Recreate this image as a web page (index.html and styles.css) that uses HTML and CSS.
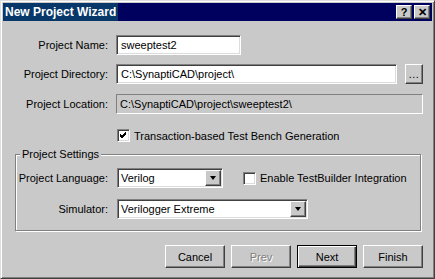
FILE: index.html
```html
<!DOCTYPE html>
<html>
<head>
<meta charset="utf-8">
<link rel="stylesheet" href="styles.css">
</head>
<body>
<div class="win">
  <div class="titlebar">
    <span class="title">New Project Wizard</span>
    <div class="tbtns">
      <div class="tbtn">?</div>
      <div class="tbtn">✕</div>
    </div>
  </div>
  <div class="row r1">
    <span class="lbl">Project Name:</span>
    <div class="field w-name">sweeptest2</div>
  </div>
  <div class="row r2">
    <span class="lbl">Project Directory:</span>
    <div class="field w-dir">C:\SynaptiCAD\project\</div>
    <div class="browse">...</div>
  </div>
  <div class="row r3">
    <span class="lbl">Project Location:</span>
    <div class="static w-loc">C:\SynaptiCAD\project\sweeptest2\</div>
  </div>
  <div class="checkrow">
    <div class="check"><svg width="11" height="11" viewBox="0 0 11 11"><path d="M2 4 L4 6 L8 2 M2 5 L4 7 L8 3 M2 6 L4 8 L8 4" stroke="#000" stroke-width="1" fill="none" shape-rendering="crispEdges"/></svg></div>
    <span class="clabel">Transaction-based Test Bench Generation</span>
  </div>
  <fieldset class="group">
    <legend>Project Settings</legend>
    <div class="grow g1">
      <span class="glbl">Project Language:</span>
      <div class="combo w-lang"><span class="ctext">Verilog</span><div class="arrow"><i></i></div></div>
      <div class="check unchecked"></div>
      <span class="clabel">Enable TestBuilder Integration</span>
    </div>
    <div class="grow g2">
      <span class="glbl">Simulator:</span>
      <div class="combo w-sim"><span class="ctext">Verilogger Extreme</span><div class="arrow"><i></i></div></div>
    </div>
  </fieldset>
  <div class="btns">
    <div class="btn">Cancel</div>
    <div class="btn disabled">Prev</div>
    <div class="btn default">Next</div>
    <div class="btn">Finish</div>
  </div>
</div>
</body>
</html>
```

FILE: styles.css
```css
* { box-sizing: border-box; }
body {
  margin: 0;
  background: #c9c9c9;
  font: 11px "Liberation Sans", Arial, sans-serif;
  color: #000;
}
.win {
  width: 435px;
  height: 279px;
  border: 1px solid;
  border-color: #dedede #404040 #404040 #dedede;
  box-shadow: inset 1px 1px #fff, inset -1px -1px #808080;
  padding: 2px;
  display: flex;
  flex-direction: column;
}
.titlebar {
  height: 18px;
  background: #00005e;
  display: flex;
  align-items: center;
}
.title {
  height: 18px;
  line-height: 18px;
  background: #08386a;
  color: #fff;
  font-weight: bold;
  font-size: 12px;
  padding: 0 2px;
  min-width: 110px;
  white-space: nowrap;
}
.tbtns {
  margin-left: auto;
  margin-right: 2px;
  display: flex;
  gap: 2px;
}
.tbtn {
  width: 16px;
  height: 14px;
  background: #c9c9c9;
  border: 1px solid;
  border-color: #fff #404040 #404040 #fff;
  box-shadow: inset -1px -1px #808080;
  font-weight: bold;
  font-size: 11px;
  line-height: 12px;
  text-align: center;
}
.row {
  display: flex;
  align-items: center;
  height: 20px;
}
.r1 { margin-top: 14px; }
.r2 { margin-top: 9px; }
.r3 { margin-top: 10px; }
.lbl {
  width: 105px;
  text-align: right;
  margin-right: 8px;
}
.field {
  height: 20px;
  background: #fff;
  border: 1px solid;
  border-color: #808080 #fff #fff #808080;
  box-shadow: inset 1px 1px #404040, inset -1px -1px #dcdcdc;
  padding: 0 4px;
  display: flex;
  align-items: center;
  white-space: nowrap;
  overflow: hidden;
}
.w-name { width: 125px; }
.w-dir { width: 281px; }
.browse {
  width: 18px;
  height: 20px;
  margin-left: 8px;
  border: 1px solid;
  border-color: #fff #404040 #404040 #fff;
  box-shadow: inset -1px -1px #808080;
  text-align: center;
  line-height: 18px;
  letter-spacing: 0.5px;
}
.static {
  height: 20px;
  border: 1px solid;
  border-color: #808080 #fff #fff #808080;
  padding: 0 3px;
  display: flex;
  align-items: center;
  white-space: nowrap;
}
.w-loc { width: 307px; }
.checkrow {
  display: flex;
  align-items: center;
  height: 13px;
  margin-top: 15px;
  padding-left: 114px;
}
.check {
  width: 13px;
  height: 13px;
  background: #fff;
  border: 1px solid;
  border-color: #808080 #fff #fff #808080;
  box-shadow: inset 1px 1px #404040, inset -1px -1px #dcdcdc;
  flex: none;
}
.check svg { display: block; }
.clabel { margin-left: 4px; white-space: nowrap; }
.group {
  margin: 6px 11px 0 12px;
  padding: 0 0 11px 0;
  border: 1px solid #808080;
  box-shadow: inset 1px 1px #fff, 1px 1px #fff;
  min-inline-size: 0;
}
.group legend {
  margin-left: 4px;
  padding: 0 2px;
  line-height: 13px;
  background: #c9c9c9;
}
.grow {
  display: flex;
  align-items: center;
  height: 20px;
}
.g1 { margin-top: 7px; }
.g2 { margin-top: 11px; }
.glbl {
  width: 92px;
  text-align: right;
  margin-right: 9px;
  white-space: nowrap;
}
.combo {
  height: 20px;
  background: #fff;
  border: 1px solid;
  border-color: #808080 #fff #fff #808080;
  box-shadow: inset 1px 1px #404040, inset -1px -1px #dcdcdc;
  padding: 1px;
  display: flex;
  align-items: center;
}
.ctext { padding-left: 2px; white-space: nowrap; }
.w-lang { width: 106px; }
.w-sim { width: 191px; }
.arrow {
  margin-left: auto;
  width: 16px;
  height: 16px;
  background: #c9c9c9;
  border: 1px solid;
  border-color: #fff #404040 #404040 #fff;
  box-shadow: inset -1px -1px #808080;
  display: flex;
  align-items: center;
  justify-content: center;
}
.arrow i {
  width: 0;
  height: 0;
  border-left: 3.5px solid transparent;
  border-right: 3.5px solid transparent;
  border-top: 4px solid #000;
}
.g1 .check { margin-left: 20px; }
.btns {
  display: flex;
  justify-content: flex-end;
  gap: 6px;
  margin: 14px 9px 0 0;
}
.btn {
  width: 60px;
  height: 23px;
  border: 1px solid;
  border-color: #fff #404040 #404040 #fff;
  box-shadow: inset -1px -1px #808080;
  display: flex;
  align-items: center;
  justify-content: center;
}
.btn.default {
  border-color: #000;
  box-shadow: inset 1px 1px #fff, inset -1px -1px #404040, inset -2px -2px #808080;
}
.btn.disabled {
  color: #808080;
  text-shadow: 1px 1px #fff;
}
```
